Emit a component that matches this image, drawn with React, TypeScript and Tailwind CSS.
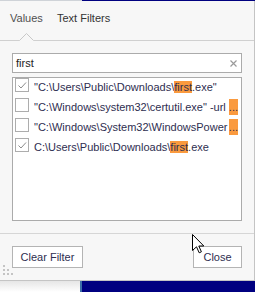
import React from "react";

type Row = {
  checked: boolean;
  parts: { text: string; hl?: boolean }[];
  more?: boolean;
};

const rows: Row[] = [
  {
    checked: true,
    parts: [
      { text: '"C:\\Users\\Public\\Downloads\\' },
      { text: "first", hl: true },
      { text: '.exe"' },
    ],
  },
  {
    checked: false,
    parts: [{ text: '"C:\\Windows\\system32\\certutil.exe" -url' }],
    more: true,
  },
  {
    checked: false,
    parts: [{ text: '"C:\\Windows\\System32\\WindowsPower' }],
    more: true,
  },
  {
    checked: true,
    parts: [
      { text: "C:\\Users\\Public\\Downloads\\" },
      { text: "first", hl: true },
      { text: ".exe" },
    ],
  },
];

function CheckBox({ checked }: { checked: boolean }) {
  return (
    <div className="flex h-[14px] w-[14px] shrink-0 items-center justify-center border border-[#adadad] bg-white">
      {checked && (
        <svg width="12" height="12" viewBox="0 0 12 12">
          <path d="M2.5 6.5 L5 9 L10 3.5" fill="none" stroke="#8c8c8c" strokeWidth="1" />
        </svg>
      )}
    </div>
  );
}

export default function App() {
  return (
    <div className="relative flex h-[292px] w-[255px] flex-col overflow-hidden bg-[#f7f7f7] font-['Liberation_Sans',Arial,sans-serif] text-[11px]">
      {/* strip of the window behind */}
      <div className="flex h-px shrink-0">
        <div className="w-[82px] bg-[#cfd3d8]" />
        <div className="flex-1 bg-[#000080]" />
      </div>

      <div className="flex h-[280px] shrink-0 flex-col border-r border-b border-[#c4c4c4] bg-[#f7f7f7]">
        {/* Tabs */}
        <div className="relative flex h-10 shrink-0 border-b border-[#d0d0d0] pl-[10px] pt-[10px] leading-[15px]">
          <span className="w-[47px] text-[#505050]">Values</span>
          <span className="text-[#333]">Text Filters</span>
          <svg className="absolute left-[19px] top-[31px]" width="15" height="9" viewBox="0 0 15 9">
            <polygon points="0,9 7.5,1.5 15,9" fill="#f7f7f7" />
            <polyline points="0.5,8.5 7.5,1.5 14.5,8.5" fill="none" stroke="#c8c8c8" strokeWidth="1" />
          </svg>
        </div>

        {/* Content */}
        <div className="flex flex-col px-3 pt-3">
          <div className="flex h-5 items-center border border-[#ababab] bg-white pl-[3px] pr-[4px]">
            <span className="flex-1 text-[#222]">first</span>
            <svg width="7" height="7" viewBox="0 0 7 7">
              <path d="M0.5 0.5 L6.5 6.5 M6.5 0.5 L0.5 6.5" stroke="#9a9a9a" strokeWidth="1.2" />
            </svg>
          </div>

          <div className="mt-1 mb-3 flex h-[144px] flex-col border border-[#ababab] bg-white pl-[2px]">
            {rows.map((r, i) => (
              <div key={i} className="flex h-5 items-start">
                <CheckBox checked={r.checked} />
                <div className="ml-[5px] mt-px flex min-w-0 flex-1 whitespace-nowrap leading-[16px] text-[#2e2e50]">
                  <span className="min-w-0 flex-1 overflow-hidden">
                    {r.parts.map((p, j) =>
                      p.hl ? (
                        <span key={j} className="bg-[#fa9a3e]">
                          {p.text}
                        </span>
                      ) : (
                        <span key={j}>{p.text}</span>
                      )
                    )}
                  </span>
                  {r.more && <span className="mr-[3px] shrink-0 bg-[#fa9a3e]">...</span>}
                </div>
              </div>
            ))}
          </div>
        </div>

        {/* Buttons */}
        <div className="relative flex flex-1 items-start justify-between border-t border-[#d6d6d6] px-3 pt-3">
          <button className="h-[22px] w-[71px] border border-[#b4b4b4] bg-white text-[#2e2e50]">Clear Filter</button>
          <button className="h-[22px] w-[49px] border border-[#b4b4b4] bg-white text-[#2e2e50]">Close</button>
          <svg className="absolute left-[3px] bottom-[4px]" width="11" height="11" viewBox="0 0 11 11">
            <rect x="0" y="0" width="2" height="2" fill="#c4c4c4" />
            <rect x="0" y="4" width="2" height="2" fill="#c4c4c4" />
            <rect x="4" y="4" width="2" height="2" fill="#c4c4c4" />
            <rect x="0" y="8" width="2" height="2" fill="#c4c4c4" />
            <rect x="4" y="8" width="2" height="2" fill="#c4c4c4" />
            <rect x="8" y="8" width="2" height="2" fill="#c4c4c4" />
          </svg>
        </div>
      </div>

      {/* window behind, below the popup */}
      <div className="flex h-[11px] shrink-0">
        <div className="w-[80px] bg-gradient-to-b from-[#e6e6e6] to-white" />
        <div className="w-[2px] bg-[#3d6fa8]" />
        <div className="flex-1 bg-[#000080]" />
      </div>

      {/* mouse pointer */}
      <svg className="absolute left-[192px] top-[234px]" width="13" height="20" viewBox="0 0 13 20">
        <path
          d="M0.5 0.5 L0.5 16.5 L4.5 12.8 L7.2 18.8 L9.4 17.8 L6.8 12 L11.8 12 Z"
          fill="white"
          stroke="black"
          strokeWidth="1"
          strokeLinejoin="miter"
        />
      </svg>
    </div>
  );
}
